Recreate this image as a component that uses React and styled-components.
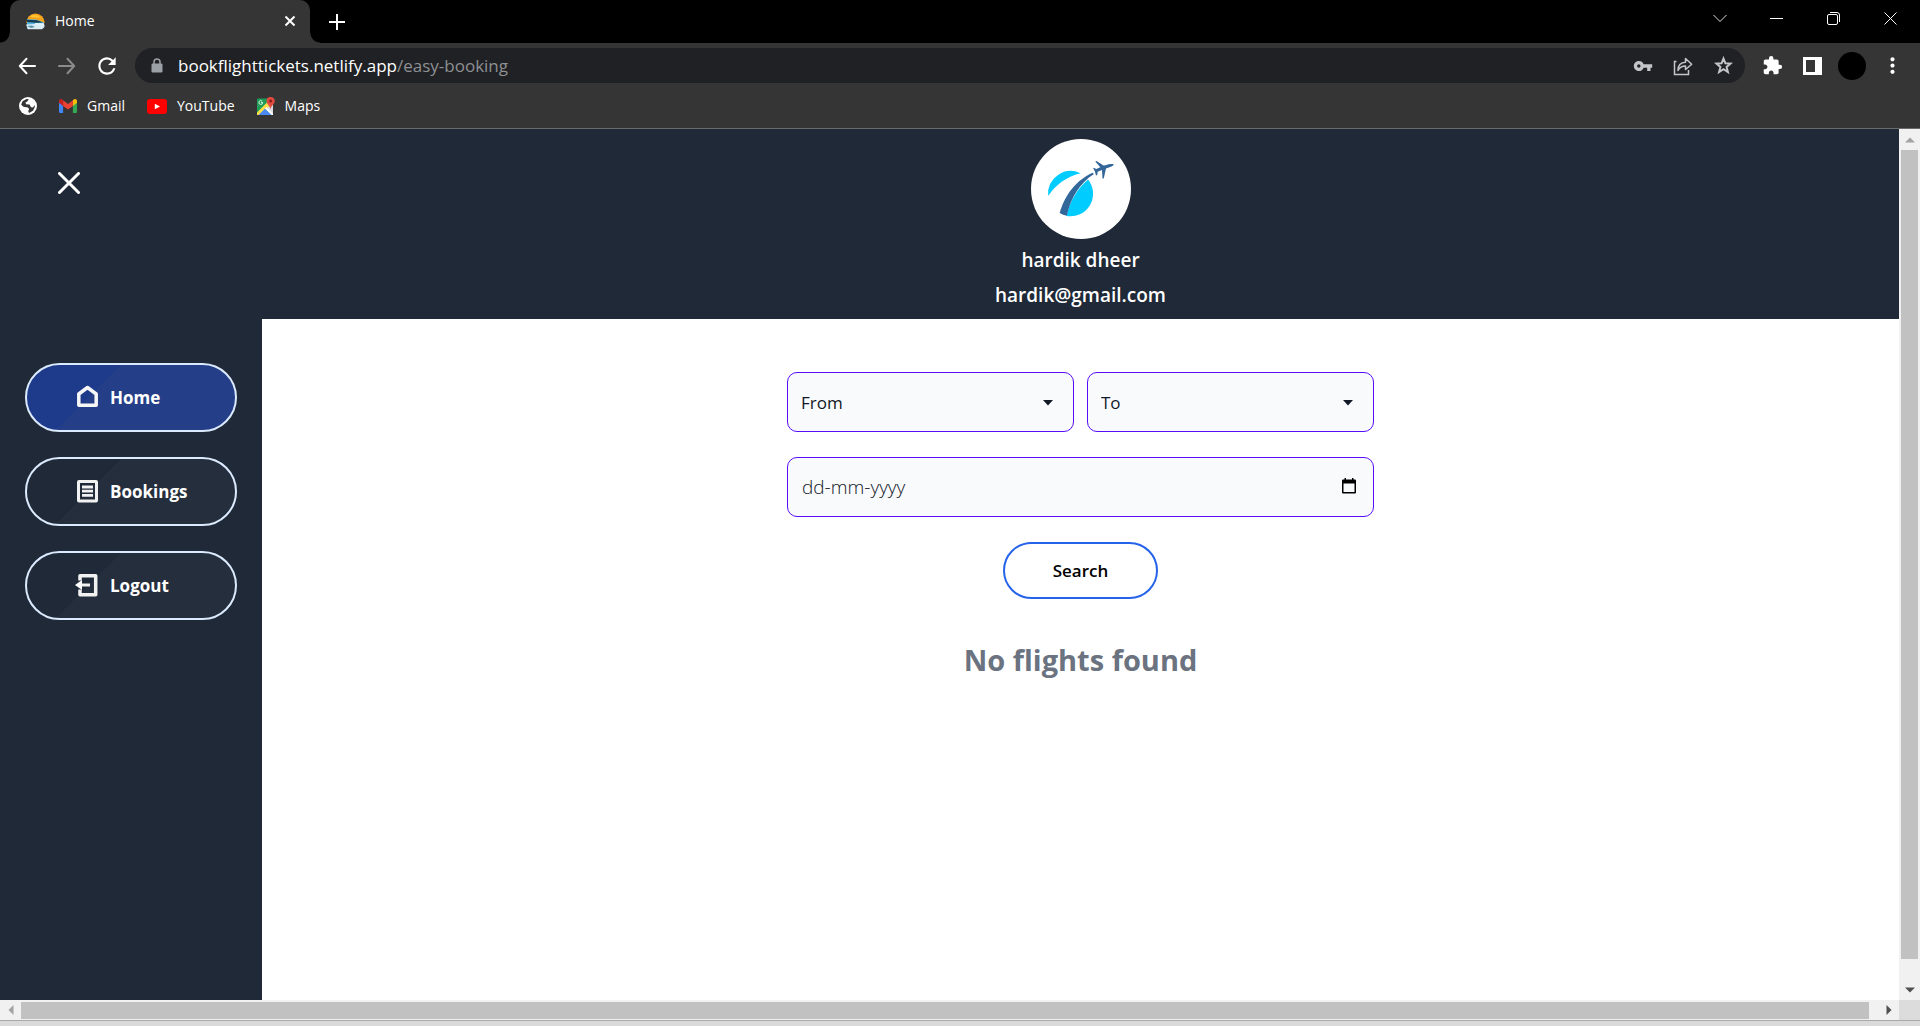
import React, { useState } from "react";
import styled, { createGlobalStyle } from "styled-components";
import { MdRefresh, MdVpnKey, MdExtension, MdMoreVert } from "react-icons/md";

const GlobalStyle = createGlobalStyle`
  *, *::before, *::after { box-sizing: border-box; }
  body { margin: 0; }
  body, button, input, select {
    font-family: "Segoe UI", "Open Sans", "Noto Sans", sans-serif;
  }
  button { padding: 0; border: 0; background: none; color: inherit; cursor: pointer; }
  svg { display: block; flex: none; }
`;

const Window = styled.div`
  display: flex;
  flex-direction: column;
  min-height: 100vh;
  background: #353535;
`;

/* ---------- browser chrome ---------- */

const TabStrip = styled.div`
  display: flex;
  align-items: stretch;
  height: 43px;
  padding: 0 1px 0 10px;
  background: #000;
  color: #fff;
`;

const Tab = styled.div`
  position: relative;
  display: flex;
  align-items: center;
  gap: 10px;
  width: 300px;
  padding: 0 12px 1px 16px;
  border-radius: 10px 10px 0 0;
  background: #353535;
  font-size: 14px;

  &::before,
  &::after {
    content: "";
    position: absolute;
    bottom: 0;
    width: 10px;
    height: 10px;
  }
  &::before {
    right: 100%;
    background: radial-gradient(circle at 0 0, #000 9px, #353535 10px);
  }
  &::after {
    left: 100%;
    background: radial-gradient(circle at 100% 0, #000 9px, #353535 10px);
  }
`;

const TabTitle = styled.span`
  flex: 1;
  line-height: 20px;
`;

const IconButton = styled.button`
  display: flex;
  align-items: center;
  justify-content: center;
  width: ${(p) => p.$w || 40}px;
  height: ${(p) => p.$h || 34}px;
  color: ${(p) => p.$color || "#fff"};
`;

const NewTab = styled(IconButton)`
  align-self: center;
  margin-left: 10px;
`;

const WindowControls = styled.div`
  display: flex;
  margin-left: auto;
`;

const Toolbar = styled.div`
  display: flex;
  align-items: center;
  padding: 5px 8px 5px 7px;
`;

const AddressBar = styled.div`
  display: flex;
  flex: 1;
  align-items: center;
  height: 35px;
  margin: 0 7px 0 8px;
  padding: 0 2px 0 16px;
  border-radius: 18px;
  background: #202124;
`;

const Address = styled.div`
  flex: 1;
  margin-left: 15px;
  color: #8e9093;
  font-size: 17px;
  line-height: 24px;
`;

const Host = styled.span`
  color: #fff;
`;

const Profile = styled.button`
  width: 28px;
  height: 28px;
  margin: 0 6px;
  border-radius: 50%;
  background: #000;
`;

const Bookmarks = styled.nav`
  display: flex;
  align-items: center;
  gap: 22px;
  height: 41px;
  padding: 0 19px 4px;
  border-bottom: 1px solid #6a6a6a;
`;

const Bookmark = styled.a`
  display: flex;
  align-items: center;
  gap: 10px;
  color: #fff;
  font-size: 14px;
  line-height: 20px;
  text-decoration: none;
`;

/* ---------- scrolling viewport ---------- */

const Viewport = styled.div`
  display: grid;
  flex: 1;
  grid-template-columns: minmax(0, 1fr) 21px;
  grid-template-rows: minmax(0, 1fr) 20px;
`;

const VBar = styled.div`
  display: flex;
  flex-direction: column;
  align-items: center;
  background: #f1f1f1;
`;

const HBar = styled.div`
  display: flex;
  align-items: center;
  background: #f1f1f1;
`;

const Arrow = styled.button`
  display: flex;
  align-items: center;
  justify-content: center;
  width: 21px;
  height: 21px;
  color: ${(p) => (p.$dim ? "#a3a3a3" : "#505050")};
`;

const VThumb = styled.div`
  flex: 1;
  width: 17px;
  margin-bottom: 20px;
  background: #c1c1c1;
`;

const HThumb = styled.div`
  flex: 1;
  height: 17px;
  margin-right: 9px;
  background: #c1c1c1;
`;

const Corner = styled.div`
  background: #dcdcdc;
`;

const BottomEdge = styled.div`
  height: 6px;
  border-top: 1px solid #a9a9a9;
  background: #dadada;
`;

/* ---------- page ---------- */

const Page = styled.div`
  display: flex;
  background: #fff;
`;

const Sidebar = styled.aside`
  width: 262px;
  padding: 37px 25px;
  background: #1f2937;
  color: #fff;
`;

const CloseMenu = styled(IconButton)`
  margin-left: 24px;
`;

const Menu = styled.nav`
  display: flex;
  flex-direction: column;
  gap: 25px;
  margin-top: 163px;
`;

const MenuLink = styled.a`
  display: flex;
  align-items: center;
  gap: 10px;
  height: 69px;
  padding-left: 48px;
  border: 2px solid #dbeafe;
  border-radius: 35px;
  background: ${(p) =>
    p.$active
      ? "linear-gradient(135deg, #1e3a8a 66px, #243e88 67px)"
      : "linear-gradient(135deg, #1f2937 66px, #252e3c 67px)"};
  color: #fff;
  font-size: 17px;
  font-weight: 700;
  line-height: 24px;
  text-decoration: none;
`;

const Main = styled.main`
  flex: 1;
  min-width: 0;
`;

const Banner = styled.header`
  display: flex;
  flex-direction: column;
  align-items: center;
  padding: 10px 0;
  background: #1f2937;
  color: #fff;
  font-size: 19px;
  font-weight: 600;
  line-height: 28px;
`;

const Logo = styled.svg`
  width: 100px;
  height: 100px;
  margin-bottom: 7px;
  border-radius: 50%;
  background: #fff;
`;

const Email = styled.span`
  margin-top: 7px;
`;

const SearchForm = styled.form`
  display: grid;
  grid-template-columns: 1fr 1fr;
  gap: 25px 13px;
  width: 587px;
  max-width: 100%;
  margin: 53px auto 0;
`;

const Field = styled.div`
  position: relative;
  display: flex;
  grid-column: ${(p) => (p.$wide ? "1 / -1" : "auto")};
`;

const Select = styled.select`
  width: 100%;
  height: 60px;
  padding: 0 40px 0 13px;
  border: 1px solid #570df8;
  border-radius: 10px;
  appearance: none;
  background: #f9fafb;
  color: #111827;
  font-size: 17px;
`;

const DateInput = styled.input`
  width: 100%;
  height: 60px;
  padding: 0 44px 0 14px;
  border: 1px solid #570df8;
  border-radius: 10px;
  background: #f9fafb;
  color: #374151;
  font-size: 19px;
  font-weight: 300;

  &::placeholder {
    color: #111827;
    opacity: 1;
  }
`;

const Caret = styled.svg`
  position: absolute;
  top: 28px;
  right: 21px;
  pointer-events: none;
`;

const PickDate = styled.button`
  position: absolute;
  top: 19px;
  right: 15px;
`;

const SearchButton = styled.button`
  grid-column: 1 / -1;
  justify-self: center;
  height: 57px;
  padding: 0 48px;
  border: 2px solid #2563eb;
  border-radius: 29px;
  background: #fff;
  color: #000;
  font-size: 17px;
  font-weight: 600;
`;

const Empty = styled.h1`
  margin: 41px 0 0;
  color: #6b7280;
  font-size: 29px;
  font-weight: 700;
  line-height: 40px;
  text-align: center;
`;

/* ---------- drawings ---------- */

const Cross = ({ size, stroke = 2, cap = "butt" }) => (
  <svg width={size} height={size} viewBox={`0 0 ${size} ${size}`} fill="none" stroke="currentColor" strokeWidth={stroke} strokeLinecap={cap}>
    <path d={`M1.5 1.5 L${size - 1.5} ${size - 1.5} M${size - 1.5} 1.5 L1.5 ${size - 1.5}`} />
  </svg>
);

const BackArrow = () => (
  <svg width="18" height="18" viewBox="0 0 18 18" fill="none" stroke="currentColor" strokeWidth="2" strokeLinecap="round" strokeLinejoin="round">
    <path d="M17 9H2M8.500 1.800L1.800 9l6.700 7.200" />
  </svg>
);

const ForwardArrow = () => (
  <svg width="18" height="18" viewBox="0 0 18 18" fill="none" stroke="currentColor" strokeWidth="2" strokeLinecap="round" strokeLinejoin="round">
    <path d="M1 9H16M9.500 1.800L16.200 9l-6.700 7.200" />
  </svg>
);

const Lock = () => (
  <svg width="12" height="15" viewBox="0 0 12 15">
    <rect x=".5" y="5.500" width="11" height="9" rx="1.200" fill="#9aa0a6" />
    <path d="M3 6V4a3 3 0 0 1 6 0V6" fill="none" stroke="#9aa0a6" strokeWidth="1.500" />
  </svg>
);

const Globe = () => (
  <svg width="18" height="18" viewBox="0 0 18 18">
    <circle cx="9" cy="9" r="9" fill="#fff" />
    <path d="M7.500 2L9.800 2.200 8.500 4.200 6.500 5.500 7 7.200 10.500 7.500 12 10.200 14 10.500 15.700 8 15.800 10 14 13.800 10 16 9.200 14 10.200 12 8.800 10.600 4.500 9.800 2.200 7.800 3.500 4.200z" fill="#353535" />
  </svg>
);

const Star = () => (
  <svg width="19" height="19" viewBox="0 0 19 19" fill="none" stroke="currentColor" strokeWidth="2" strokeLinejoin="miter">
    <path d="M9.500 2.500L11.400 7.300 16.500 7.600 12.600 10.900 13.900 16 9.500 13.200 5.100 16 6.400 10.900 2.500 7.600 7.600 7.300z" />
  </svg>
);

const Favicon = () => (
  <svg width="19" height="17" viewBox="0 0 19 17">
    <path d="M.3 10a9.200 9.500 0 0 1 18.400 0z" fill="#f7a41d" />
    <path d="M3.500 3.500a9 9 0 0 1 11 1L9 4.500z" fill="#ffc832" />
    <path d="M1 6.300L10 6.500l8 3v5L15 16H1z" fill="#56b4dd" />
    <path d="M1 6.800l10 .5 6 2.200-7 .3L1 9z" fill="#173b52" />
    <path d="M9 10l9 .3.500 2.700H9z" fill="#e2f4fb" />
    <path d="M0 11.500l9-.5 10 2.500-3 2.800H2z" fill="#dcecf5" />
    <path d="M1 13l5-.5 3 1.500-4 1z" fill="#5e93ad" />
  </svg>
);

const Gmail = () => (
  <svg width="18" height="14" viewBox="0 0 18 14">
    <path d="M0 2.500V12.700C0 13.400.6 14 1.300 14H4.100V5.500z" fill="#4285f4" />
    <path d="M18 2.500V12.700c0 .7-.6 1.300-1.300 1.300H13.900V5.500z" fill="#34a853" />
    <path d="M13.900 1.300V6.900L18 3.800V2C18 .3 16.100-.6 14.800.5z" fill="#fbbc04" />
    <path d="M4.100 6.900V1.300L9 5l4.900-3.700v5.600L9 10.600z" fill="#ea4335" />
    <path d="M0 2v1.800l4.100 3.100V1.300L3.200.5C1.900-.6 0 .3 0 2z" fill="#c5221f" />
  </svg>
);

const YouTube = () => (
  <svg width="20" height="15" viewBox="0 0 20 15">
    <rect width="20" height="15" rx="3" fill="#f00" />
    <path d="M7.800 4.700v5.600l5.200-2.800z" fill="#fff" />
  </svg>
);

const Maps = () => (
  <svg width="18" height="18" viewBox="0 0 18 18">
    <rect y="1.500" width="16" height="16.500" rx="1" fill="#1f9d58" />
    <path d="M16 7v10.500L8.500 10z" fill="#d8dce0" />
    <path d="M0 15.500L10 5.500l3 3L3 18H0z" fill="#ffe047" />
    <path d="M8 11.500L14.500 18H1.500z" fill="#4a89f3" />
    <path d="M8 11.500l1.500-1.500L16 16.500V18h-1.500z" fill="#fff" />
    <path d="M5.700 5.400H3.900M5.700 5.400a1.900 1.900 0 1 1-.6-1.300" fill="none" stroke="#d6eedf" strokeWidth="1" />
    <path d="M13.500 0A4 4 0 0 0 9.500 4c0 3 3 4 4 8 1-4 4.300-5 4.300-8A4.100 4.100 0 0 0 13.500 0z" fill="#e04a3f" />
    <circle cx="13.600" cy="4" r="1.500" fill="#8c1d18" />
  </svg>
);

const Share = () => (
  <svg width="20" height="20" viewBox="0 0 20 20" fill="none" stroke="currentColor" strokeWidth="1.500">
    <path d="M3.500 5.500H1.500V18.500H15.500V14" />
    <path d="M5 14.500C5 9 8 6.500 12.500 6.300V2.500L18.700 8.200 12.500 13.500V10C9 10 6.700 11.200 5 14.500z" strokeLinejoin="round" />
  </svg>
);

const SidePanel = () => (
  <svg width="19" height="18" viewBox="0 0 19 18">
    <path fillRule="evenodd" d="M0 0H19V18H0zM3 3V15H12V3z" fill="currentColor" />
  </svg>
);

const HomeIcon = () => (
  <svg width="25" height="25" viewBox="0 0 25 25" fill="none" stroke="#f7f7f8" strokeWidth="3.500" strokeLinejoin="round">
    <path d="M3.800 20.200V9L12.500 2.500l8.700 6.500v11.200z" />
  </svg>
);

const BookingsIcon = () => (
  <svg width="25" height="25" viewBox="0 0 25 25" fill="none" stroke="#f2f2f3">
    <rect x="3.500" y="2.500" width="18" height="19.500" rx=".5" strokeWidth="3" />
    <path d="M7 8H18M7 12.200H18M7 16.400H18" strokeWidth="2.800" />
  </svg>
);

const LogoutIcon = () => (
  <svg width="25" height="25" viewBox="0 0 25 25" fill="none" stroke="#f2f2f3">
    <path d="M5 7.500V2.700H20.700V21.800H5V16.500" strokeWidth="3.500" strokeLinejoin="round" />
    <path d="M4 12H15" strokeWidth="3" />
    <path d="M0 12L7 7V17z" fill="#fff" stroke="none" />
  </svg>
);

const Triangle = ({ d, w, h }) => (
  <svg width={w} height={h} viewBox={`0 0 ${w} ${h}`}>
    <path d={d} fill="currentColor" />
  </svg>
);

const AirlineLogo = () => (
  <Logo viewBox="0 0 100 100" role="img" aria-label="Airline logo">
    <path d="M17.200 57A22.600 22.600 0 0 1 49.500 34.300C35 38 24.500 46 17.200 57z" fill="#0cf" />
    <path d="M57 40.500A22.600 22.600 0 0 1 35.500 77C39 62 46 50 57 40.500z" fill="#0cf" />
    <path d="M28.700 74C33 59 42 43 61.500 33.700L63 35C49 44 40 58 35.800 76.800Q32 76 28.700 74z" fill="#369" />
    <path d="M82.800 25.300C80.500 24.600 77.500 25.200 74.500 26.300L72.500 26.500 65.500 22 64.300 22.500 69.300 28.300 65.300 30 62.800 28.800 62.200 29.300 63.800 32.300 65 36.500 66.200 36 66.700 32.800 71 31 71.500 39.800 72.800 39.200 75 29.600 80.500 27.500Q82.600 26.500 82.800 25.300z" fill="#369" />
  </Logo>
);

const MENU = [
  { label: "Home", Icon: HomeIcon },
  { label: "Bookings", Icon: BookingsIcon },
  { label: "Logout", Icon: LogoutIcon },
];

const BOOKMARKS = [
  { label: "Gmail", Icon: Gmail },
  { label: "YouTube", Icon: YouTube },
  { label: "Maps", Icon: Maps },
];

function PlaceSelect({ id, label }) {
  return (
    <Field>
      <Select id={id} aria-label={label} defaultValue="">
        <option value="">{label}</option>
      </Select>
      <Caret width="10" height="6" viewBox="0 0 10 6">
        <path d="M0 0H10L5 5.500z" fill="#111827" />
      </Caret>
    </Field>
  );
}

export default function App() {
  const [date, setDate] = useState("");
  return (
    <Window>
      <GlobalStyle />
      <TabStrip>
        <Tab>
          <Favicon />
          <TabTitle>Home</TabTitle>
          <IconButton $w={16} $h={20} aria-label="Close tab"><Cross size={12} /></IconButton>
        </Tab>
        <NewTab $w={34} aria-label="New tab">
          <svg width="16" height="16" viewBox="0 0 16 16" stroke="currentColor" strokeWidth="2"><path d="M8 0V16M0 8H16" /></svg>
        </NewTab>
        <WindowControls>
          <IconButton $w={57} $h={37} aria-label="Search tabs">
            <svg width="14" height="9" viewBox="0 0 14 9" fill="none" stroke="#ddd"><path d="M.5 1L7 7.500 13.500 1" /></svg>
          </IconButton>
          <IconButton $w={57} $h={37} aria-label="Minimize">
            <svg width="13" height="1" viewBox="0 0 13 1"><path d="M0 0H13V1H0z" fill="#fff" /></svg>
          </IconButton>
          <IconButton $w={57} $h={37} aria-label="Restore">
            <svg width="13" height="13" viewBox="0 0 13 13" fill="none" stroke="#fff"><rect x=".5" y="2.500" width="10" height="10" rx="1.500" /><path d="M3 .5H10Q12.500 .5 12.500 3V10" /></svg>
          </IconButton>
          <IconButton $w={57} $h={37} aria-label="Close window"><Cross size={15} stroke={1} /></IconButton>
        </WindowControls>
      </TabStrip>
      <Toolbar>
        <IconButton aria-label="Back"><BackArrow /></IconButton>
        <IconButton $color="#8b8b8b" aria-label="Forward"><ForwardArrow /></IconButton>
        <IconButton aria-label="Reload"><MdRefresh size={26} /></IconButton>
        <AddressBar>
          <Lock />
          <Address><Host>bookflighttickets.netlify.app</Host>/easy-booking</Address>
          <IconButton $color="#c4c5c6" aria-label="Passwords"><MdVpnKey size={20} /></IconButton>
          <IconButton $color="#c4c5c6" aria-label="Share"><Share /></IconButton>
          <IconButton $color="#c4c5c6" aria-label="Bookmark this page"><Star /></IconButton>
        </AddressBar>
        <IconButton aria-label="Extensions"><MdExtension size={21} /></IconButton>
        <IconButton aria-label="Side panel"><SidePanel /></IconButton>
        <Profile aria-label="Profile" />
        <IconButton aria-label="Menu"><MdMoreVert size={25} /></IconButton>
      </Toolbar>
      <Bookmarks>
        <Globe />
        {BOOKMARKS.map(({ label, Icon }) => (
          <Bookmark key={label} href="#"><Icon />{label}</Bookmark>
        ))}
      </Bookmarks>
      <Viewport>
        <Page>
          <Sidebar>
            <CloseMenu aria-label="Close menu"><Cross size={22} stroke={3} cap="round" /></CloseMenu>
            <Menu>
              {MENU.map(({ label, Icon }, i) => (
                <MenuLink key={label} href="#" $active={i === 0}><Icon />{label}</MenuLink>
              ))}
            </Menu>
          </Sidebar>
          <Main>
            <Banner>
              <AirlineLogo />
              <span>hardik dheer</span>
              <Email>hardik@gmail.com</Email>
            </Banner>
            <SearchForm onSubmit={(e) => e.preventDefault()}>
              <PlaceSelect id="from" label="From" />
              <PlaceSelect id="to" label="To" />
              <Field $wide>
                <DateInput id="date" type="text" aria-label="Date" placeholder="dd-mm-yyyy" value={date} onChange={(e) => setDate(e.target.value)} />
                <PickDate type="button" aria-label="Pick a date">
                  <svg width="20" height="20" viewBox="0 0 20 20">
                    <path fillRule="evenodd" d="M4 3.500h1.500V2H7v1.500h6V2h1.500v1.500H16Q17 3.500 17 4.500V16.500Q17 17.500 16 17.500H4Q3 17.500 3 16.500V4.500Q3 3.500 4 3.500zM4.500 7.500v8.500h11v-8.500z" fill="#000" />
                  </svg>
                </PickDate>
              </Field>
              <SearchButton type="submit">Search</SearchButton>
            </SearchForm>
            <Empty>No flights found</Empty>
          </Main>
        </Page>
        <VBar>
          <Arrow $dim aria-label="Scroll up"><Triangle w={10} h={6} d="M0 5.500L5 .5 10 5.500z" /></Arrow>
          <VThumb />
          <Arrow aria-label="Scroll down"><Triangle w={10} h={6} d="M0 .5L5 5.500 10 .5z" /></Arrow>
        </VBar>
        <HBar>
          <Arrow $dim aria-label="Scroll left"><Triangle w={6} h={10} d="M5.500 0L.5 5 5.500 10z" /></Arrow>
          <HThumb />
          <Arrow aria-label="Scroll right"><Triangle w={6} h={10} d="M.5 0L5.500 5 .5 10z" /></Arrow>
        </HBar>
        <Corner />
      </Viewport>
      <BottomEdge />
    </Window>
  );
}
